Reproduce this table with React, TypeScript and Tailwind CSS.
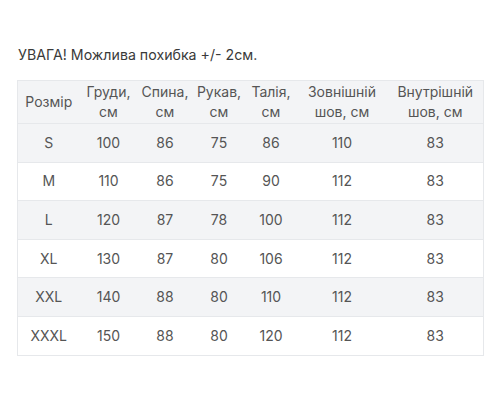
const header: string[][] = [
  ['Розмір'],
  ['Груди,', 'см'],
  ['Спина,', 'см'],
  ['Рукав,', 'см'],
  ['Талія,', 'см'],
  ['Зовнішній', 'шов, см'],
  ['Внутрішній', 'шов, см'],
]

const rows = [
  ['S', '100', '86', '75', '86', '110', '83'],
  ['M', '110', '86', '75', '90', '112', '83'],
  ['L', '120', '87', '78', '100', '112', '83'],
  ['XL', '130', '87', '80', '106', '112', '83'],
  ['XXL', '140', '88', '80', '110', '112', '83'],
  ['XXXL', '150', '88', '80', '120', '112', '83'],
]

const widths = ['w-[62px]', 'w-[58px]', 'w-[55px]', 'w-[53px]', 'w-[51px]', 'w-[91px]', 'w-[96px]']

export default function App() {
  return (
    <div className="w-[500px] h-[400px] bg-white px-[17px] pt-[45px] font-['Inter',sans-serif] text-[14px] text-[#555]">
      <p className="leading-5 text-[14.2px] text-[#3a3a3a] mb-[15px] pl-[1px]">УВАГА! Можлива похибка +/- 2см.</p>
      <table className="w-[466px] table-fixed border-collapse border border-[#e6e8eb]">
        <thead>
          <tr className="bg-[#f3f4f6] h-[43px]">
            {header.map((h, i) => (
              <th key={i} className={`${widths[i]} font-normal text-center leading-5 align-middle px-0`}>
                {h.map((line, j) => (
                  <div key={j}>{line}</div>
                ))}
              </th>
            ))}
          </tr>
        </thead>
        <tbody>
          {rows.map((r, i) => (
            <tr
              key={r[0]}
              className={`h-[38.6px] border-t border-[#e6e8eb] ${i % 2 === 0 ? 'bg-[#f3f4f6]' : 'bg-white'}`}
            >
              {r.map((c, j) => (
                <td key={j} className="text-center align-middle leading-5 px-0">
                  {c}
                </td>
              ))}
            </tr>
          ))}
        </tbody>
      </table>
    </div>
  )
}
